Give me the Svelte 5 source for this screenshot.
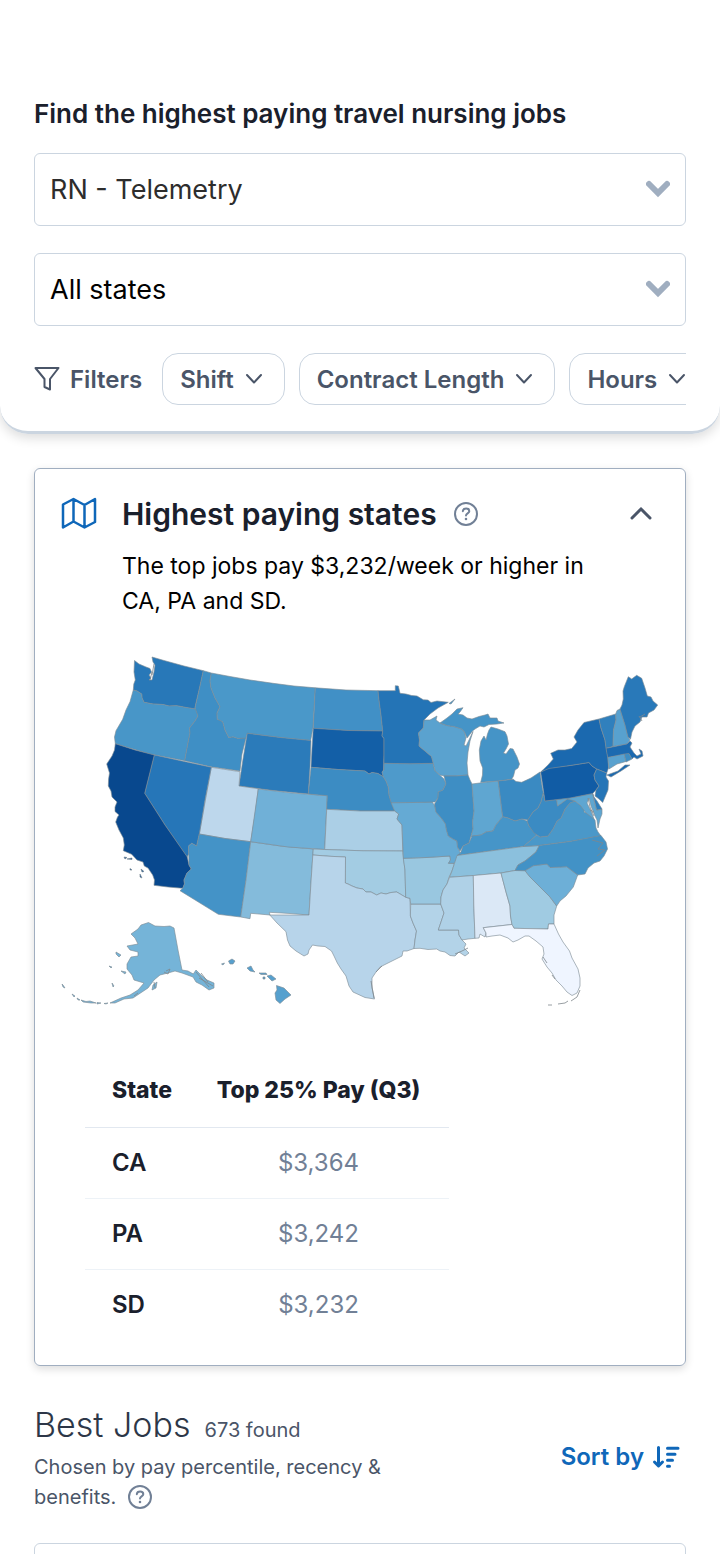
<script>
  let specialty = $state('RN - Telemetry');
  let region = $state('All states');
  let open = $state(true);

  const chips = ['Shift', 'Contract Length', 'Hours'];
  const rows = [
    { state: 'CA', pay: '$3,364' },
    { state: 'PA', pay: '$3,242' },
    { state: 'SD', pay: '$3,232' }
  ];

  // Each entry: fill colour and one or more outlines of the state.
  const states = [
    ['#2878b8', 'M134.5 660.5L139 664L146 667L150 668.5L151.5 672L149 675L151 678L149 680L152 680L154 672L155 665L153 662L152 657L164 660.5L184 666L203.3 670.7L200 686L196 703L194.7 709L186 707.5L176.7 705.7L169 706L163 704.5L153 704L144 702.3L142 698L141.7 694L137 691L133.3 690L133.8 684L135.3 680L134 672Z'],
    ['#4896c8', 'M133.3 690L137 691L141.7 694L142 698L144 702.3L153 704L163 704.5L169 706L176.7 705.7L186 707.5L196 709L198 716L195 721L189.5 728L190 733L188 743L184.7 760.7L150 754L115.3 743.7L114.5 737L116 730.7L122.7 719.3L126 710L130 701.7Z'],
    ['#3f8fc5', 'M203.3 670.7L211.3 673L210 681L211 688L215 698L220 706.7L217 713L217.3 719.3L220 720L222.7 721.7L225 730L228.7 737.5L233 736.8L238 738.5L244.7 737.3L246 738L242 754L240 771L211 766.8L184.7 760.7L188 743L190 733L189.5 728L195 721L198 716L195 708L200 686Z'],
    ['#4a98c9', 'M211.3 673L230 676.5L250 680L273 683.3L294 686L315.3 687.8L314 710L313 728L310.7 740.5L280 737.5L247.3 733.3L246 738L238 738.5L233 736.8L228.7 737.5L225 730L222.7 721.7L217.3 719.3L217 713L220 706.7L215 698L211 688L210 681Z'],
    ['#2b7bba', 'M247.3 733.3L280 737.5L311 740.5L310 767L308.3 794L273 790.5L239 786L243 759Z'],
    ['#bdd7ec', 'M211.3 767.3L240 771.7L239 786L258.3 788.7L255 815L250.7 841.7L225 838.5L199.3 834Z'],
    ['#2676b8', 'M154.3 755L182 761L211.3 767.3L205 800L199.3 834L196.7 846L191.7 843.3L188.5 846L188.7 854L187 857L165 825L144.7 793.3Z'],
    ['#08488e', 'M115.3 743.7L135 750L154.3 755L144.7 793.3L165 825L187.3 857L189 865L191.3 869L187 873L184 880L184.5 884L182.7 888.3L168 887L154 885.3L154.5 880L152.7 875L148 868L144.3 866L143 862L137 860L131.7 854.3L123.3 850.7L124.3 845L123.3 838L119 830L115.7 822L117.5 817L119 815L115 811.5L115 807L117 802L115 800L112 797L111 791L108.3 786L108.6 779L109.5 773L106.7 764L112 756L114.5 750Z'],
    ['#4493c7', 'M199.3 834L225 838.5L250.7 841.7L246 880L240.7 917L218.3 914.3L200 903L180 890.7L182.7 888.3L184.5 884L184 880L187 873L191.3 869L189 865L188.7 854L188.5 846L191.7 843.3L196.7 846Z'],
    ['#84bbdb', 'M250.7 841.7L281 846L313.3 849L311 882L309 915L290 913.5L269.3 912.3L270 915L250.7 913.3L250 918.7L240.7 917L246 880Z'],
    ['#70b0d7', 'M258.3 789L292 793L327.3 795.7L326 822L324.7 849.5L288 847L250.7 841.7Z'],
    ['#4190c6', 'M315.3 687.8L346 690L378 690.7L379 700L381 715L382.7 731L348 730.5L313.3 728.3Z'],
    ['#135fa7', 'M313.3 728.3L348 730.5L382.7 731L382 736L384 738.5L384 755L383.6 770L382 772L383.3 776.7L378 773.5L372 772.5L369 774L365 771L338 769.5L311 767.3L312 748Z'],
    ['#3c8cc3', 'M311 767.3L338 769.5L365 771L369 774L372 772.5L378 773.5L383.3 776.7L386 781L388.3 787L389 795L391 801L394.7 811L360 811L326.7 809.3L327.3 795.7L308.3 794Z'],
    ['#abcfe6', 'M326.7 809.3L360 811L394.7 811L398.7 814L397 819L402 825L402.7 851L363 850.8L324.7 849.5Z'],
    ['#a3cce3', 'M313.3 849L324.7 849.5L363 850.8L402.7 851L405 870L405.7 897.3L401 894.5L396.7 892L391 892.5L386 894L381 893L376.7 895L371 892L366 892L363 889L357 888L352 886L348 884L345.3 883L345.5 857L330 856.3L312.8 855Z'],
    ['#b7d4ea', 'M312.8 855L330 856.3L345.5 857L345.3 883L348 884L352 886L357 888L363 889L366 892L371 892L376.7 895L381 893L386 894L391 892.5L396.7 892L401 894.5L405.7 897.3L410 898.3L410.4 916L413 923L416.5 931L415 940L414 948.5L407 951L403 951L402 956L396 959L388 963L380 967L376 972L372 978L372 988L374.5 999L365 997.5L353 992L349 986L346 976L341 969L337.3 963L334 956L331.5 951L325 946.5L318 946L312.5 945L309 950L308 954L304 956L296 951L290 946L287.5 940L286 931.7L277 923L269.8 915L309 915L311 882Z'],
    ['#b3d3e8', 'M410.7 904L440.7 904L444 913L441 922L438.3 930L458.5 930L459 935L462 940L466 944L464 948L469 953L465 956L459 952L455 956L450 955.5L445 952L440 951L436.7 949L428 949.5L420 948.3L414 948.5L415 940L416.5 931L413 923L410.4 916Z'],
    ['#99c7e0', 'M403.3 858.3L426 857.5L450 856L450.5 860L448.5 863.3L454.5 863.3L452 871L449 877.3L447 884L443 890L441 897L440.7 904L410.7 904L410 898.3L405.7 897.3L405 870Z'],
    ['#65aad4', 'M391 802.7L412 802.5L432 801.8L435 806L436 812L442 819L445.5 824L446.5 830L448.3 836L453 839L457 841L457.5 847L460.5 853L458 855L457 858L455.5 861.7L454 863.3L448.5 863.3L450.5 860L450 856L426 857.5L403.3 858.3L402.5 838L402 825L397 819L398.7 814L394.7 811Z'],
    ['#4e9acb', 'M384 763.3L410 763.7L433.3 763.3L434.5 770L438.5 774L444 779L446 784L443 790L438.3 792L438 798L435 802L412 802.5L391 802.7L389 795L388.3 787L386 781L383.3 776.7L382 772L384 770Z'],
    ['#2474b6', 'M378 690.7L395.3 690.7L395.3 685.7L398.3 686L400 693.3L406 694L411.7 695.5L417 696L423.3 699.8L428 700L431 702.5L437 701L448.3 702.3L438 708L430 714L424 720L423.3 728L418.5 733L419.5 740L419 746L425 751L431.5 756.5L433.3 763.3L410 763.7L384 763.3L384 738.5L382 736L382.7 731L381 715L379 700Z'],
    ['#5aa2cf', 'M424 720L430 720L437 716L436 720L440 723L447 725.5L454 726.5L461.7 729L464.5 732L466 738L464 745L466 746L469 740L473 731.5L470 741L468 752L467 763L468 775L456 776L444 776L440 775L435 771L433.3 763.3L431.5 756.5L425 751L419 746L419.5 740L418.5 733L423.3 728Z'],
    ['#4594c7', 'M440 723L447 718L452 714L457 709L463 707.7L460 712L458 714L463 715L467 718L472 719L479 716.5L485 715L488 714L490 718L497 718L498 721L504 723L497 724L489 724.5L484 727L480 726L475 729L472.5 731L467 738L464.5 732L461.7 729L454 726.5L447 725.5ZM491 727L498 729L505 731.7L507 736L508.5 744L506 749L503.5 753L506 754L510 748.5L513 749L517 757L519.5 764L518 768L515 770L513.5 776L511.7 779.3L498 781L480.7 782.3L482.5 775L482.7 768L480 761L479.3 750L481 741L484 736L486 740L487.5 734L489 730ZM449 703.5L455 699L451 704Z'],
    ['#3e8ec4', 'M444 776L456 776L468 775L470 780L472 784L473 798L474 811L472.5 822L473 829L471 836L469 843L463 846L460 851L457.5 847L457 841L453 839L448.3 836L446.5 830L445.5 824L442 819L436 812L434.5 804L438 798L438.3 792L443 790L446 784Z'],
    ['#5fa6d1', 'M472 784L485 782.3L498.3 781L500.5 799L502.7 816.7L500 820L496 825L493 831L486 832L481 835L471 836.5L473 829L472.5 822L474 811L473 798Z'],
    ['#3a8ac2', 'M498.3 781L513.3 779.3L516 781.5L521.7 782.3L531 778L540 772L542 786L543.3 793L541 802L538 808L533 812L528 820L522 819L515 821L508 818L502.7 816.7L500.5 799Z'],
    ['#4695c8', 'M457 855.5L460.5 853L463 846L469 843L472 836L481 835L486 832L493 831L496 825L500 820L502.7 816.7L508 818L515 821L522 819L527 821L529 826L536.7 835L531 840L523.3 846.5L490 851Z'],
    ['#8bc0dd', 'M457 855.5L490 851L523.3 846.5L539.3 845.5L536 852L530 857L525 861L518 865L515 870.5L501 873L475 875.5L449.5 877.3L452 871L454.5 863.3Z'],
    ['#4a98c9', 'M523.3 846.5L531 840L536.7 835L540 837L548 836L553 829L557 821L561 818L565 809L570 803L575 801L580 805L585 808L584 812L589 814L595 820L596 828L598 832L601 836L570 841.5L539.3 845.5Z'],
    ['#3b8bc3', 'M543.3 793L545 801L556.7 799.5L557.5 806L563 802L567 799L572 799L575 801L570 803L565 809L561 818L557 821L553 829L548 836L540 837L534 833L529 826L527 821L533 812L538 808L541 802Z'],
    ['#5fa6d1', 'M556.7 799.5L575 797L592.7 793.5L594.5 802L596.7 810L602 809L602 814L600 819L598 828L597 820L595 816L591 806L589 798L587 803L591 811L594 819L586 813L580 805L575 801L567 799L563 802L557.5 806Z'],
    ['#2e7ebc', 'M592.7 793.5L594 797L597 801L602 809L596.7 810Z'],
    ['#115ca5', 'M540.7 772L549 767.7L570 765.5L589 762.5L592 766L596.7 769L594 775L595 780L599 786L596 790L592.7 793.5L570 798L545 801Z'],
    ['#1b69af', 'M540.7 772L548 765L553.3 759L550.7 753.3L558 750L565 750L571.7 748.5L577 742L574 737L578 730L584 722.5L599 719L601 728L605 740L606.5 750L608 757L608.5 768L606.7 773L596.7 769L592 766L589 762.5L570 765.5L549 768.5ZM607 775L618 771L625 765L630 765L621 771L611 777Z'],
    ['#2575b7', 'M596.7 769L606.7 773L606 777L608.5 781L608 790L605 797L602.7 802.5L599 799L595 796L596 790L599 786L595 780L594 775Z'],
    ['#3080bd', 'M599 719L615.7 714L616 720L613.5 730L613 746.5L606 748.3L605 740L601 728Z'],
    ['#58a1cf', 'M615.7 714L617 710.5L620 709L625 725L628 737L630 740L627 744L613 746.5L613.5 730L616 720Z'],
    ['#2979b9', 'M620 709L622 705L623.3 699L623 691L624.3 686.7L628.3 676.7L631.7 679L636.7 675.3L641.7 678.3L645 688L647.3 696L651 697L653 701L657.7 705L654 710L648.5 713L647 717L642 717L640 722L635 726L632 732L630.5 739L628 737L625 725Z'],
    ['#1c6ab0', 'M606 748.3L627 744L630 741L632 743L630 747L634 753L637 756L641 754L639 749L642 751L643 756L637 759L634 757L632 759L629 754L607.7 757.5Z'],
    ['#5aa2cf', 'M607.7 757.5L624.3 754L626 761.5L617 764L609 769Z'],
    ['#3d8dc3', 'M624.3 754L629 753.5L632 759L626 762Z'],
    ['#afd1e7', 'M449.5 877.3L473.3 875.5L473.8 905L475 938.3L468 939L462 940L459 935L458.5 930L438.3 930L441 922L444 913L440.7 904L441 897L443 890L447 884Z'],
    ['#dbe8f6', 'M473.3 875.5L501 873L506 892L510 906L510.5 916L512 924.5L483.3 927.7L486 933L485 937L480 934L479 938L475 938.3L473.8 905Z'],
    ['#a0cbe2', 'M501 873L515 870.5L525 870.7L530 877L540 887L550 897L556.7 906L554 915L554 924L548.5 924L548 929L514 928.3L512 924.5L510.5 916L510 906L506 892Z'],
    ['#6dafd7', 'M525 870.7L533.3 865.7L547 864L550 867.5L566.7 866.7L577.7 875L573.3 887L566 896L560 901L556.7 906L550 897L540 887L530 877Z'],
    ['#4292c6', 'M515 870.5L518 865L525 861L530 857L536 852L539.3 845.5L570 841.5L601 835.5L606 842L607.5 849L604 856L600 861L594 863L588 868L585 874L577.7 875L566.7 866.7L550 867.5L547 864L533.3 865.7L525 870.7Z'],
    ['#eff5ff', 'M483.3 927.7L512 924.5L514 928.3L548 929L548.5 924L554 924L558.5 934L563 942L569.5 951L572 958L578 969L580 978L580 986L577 993L572 995.5L567 992L562 986L556 980L552 973L547 967L542 959L544 954L543 947L536 941L529 936L525 936L518 940L513 942L508 938L500 935L492 936L486 937L486 933Z'],
    ['#75b4d8', 'M148.5 922.5L155 926L164 926.5L170 926L174 928L178 950L182 970L188 971L193.3 974L196 970L201 975L207 980L214 983L214 988L209 990L202 985L196 982L193 977L182 973L175 971L168 973L160 975L154 980L148 988L139 994L133 998L124 999L115 1003L110 1003L121 998L130 995L138 990L144 983L134 980L132 975L127 969L127 964L131 957L138 956L138 952L130 950L127 946L138 944L135 938L131 934L138 929L141 925ZM152 990L153 985L157 982L156 988ZM116 952L121 955L119 957L116 954ZM121 971L126 972L125 974ZM109 966L112 967L111 968ZM112 983L114 986L113 987Z'],
    ['#75b4d8', 'M62 984L63 985L65 988L63 987ZM72 994L75 996L74 997ZM77 998L80 1000L78 1000ZM81 1000L86 1001.5L90 1001L96 1003L91 1003L83 1002ZM97 1002.5L101 1003L97 1004ZM104 1003.5L108 1003L106 1004Z'],
    ['#56a0ce', 'M228.5 961L232 959L235 961L233 964L230 964ZM221.5 964L224.5 963L223 965ZM247 968L251 966L253 970L255 972L250 971ZM259 973L266 973L267 974.5L261 974.5ZM267 976L271 975L276 979L272 981L269 978ZM263 977L265 977L265 979L263 979ZM276.5 985.5L284 988L291 995L285 999L280 1003.5L276 1000L275 993L277 990Z'],
    ['#08488e', 'M124 857L127 857.5L125 859ZM127 859L132 858L132 859.5ZM130 868.5L132 870L130 870ZM141 869L144 871.5L142 872ZM140 874L142 878L140 877Z']
  ];
</script>

{#snippet help()}
  <svg class="help" viewBox="0 0 24 24" fill="none" stroke="currentColor" stroke-width="2" stroke-linecap="round" aria-hidden="true">
    <circle cx="12" cy="12" r="11" />
    <path d="M8.8 9.2C9 7.6 10.3 6.6 12.1 6.6C14 6.6 15.3 7.7 15.3 9.2C15.3 11.3 12 11.4 12 13.4" />
    <circle cx="12" cy="17" r=".7" fill="currentColor" stroke-width="1.2" />
  </svg>
{/snippet}

{#snippet caret()}
  <svg class="caret" viewBox="0 0 24 20" fill="none" stroke="#a0aec0" stroke-width="6" stroke-linecap="round" aria-hidden="true">
    <path d="M3 4L12 13L21 4" />
  </svg>
{/snippet}

<div class="page">
  <header>
    <h1>Find the highest paying travel nursing jobs</h1>
    <div class="select">
      <select class="soft" aria-label="Specialty" bind:value={specialty}>
        <option>RN - Telemetry</option>
      </select>
      {@render caret()}
    </div>
    <div class="select">
      <select aria-label="State" bind:value={region}>
        <option>All states</option>
      </select>
      {@render caret()}
    </div>
    <div class="filters">
      <button class="plain">
        <svg width="26" height="26" viewBox="0 0 26 26" fill="none" stroke="currentColor" stroke-width="2" stroke-linejoin="round" aria-hidden="true">
          <path d="M1.5 2H24.5L16 13V23.5L10.5 21V13Z" />
        </svg>
        Filters
      </button>
      {#each chips as chip}
        <button class="chip">
          {chip}
          <svg width="18" height="12" viewBox="0 0 18 12" fill="none" stroke="currentColor" stroke-width="2" stroke-linecap="round" stroke-linejoin="round" aria-hidden="true">
            <path d="M2 2L9 9.5L16 2" />
          </svg>
        </button>
      {/each}
    </div>
  </header>

  <main>
    <section class="card">
      <div class="head">
        <svg class="map-icon" width="36" height="34" viewBox="0 0 36 34" fill="none" stroke="#0f67b9" stroke-width="2.5" stroke-linejoin="round" aria-hidden="true">
          <path d="M2 8.5L12.5 3L23.5 9L34 3V26L23.5 31.5L12.5 25.5L2 31.5ZM12.5 3V25.5M23.5 9V31.5" />
        </svg>
        <div class="copy">
          <h2>Highest paying states <button class="icon" aria-label="About highest paying states">{@render help()}</button></h2>
          <p>The top jobs pay $3,232/week or higher in CA, PA and SD.</p>
        </div>
        <button class="icon toggle" aria-label="Toggle" aria-expanded={open} onclick={() => (open = !open)}>
          <svg width="22" height="14" viewBox="0 0 22 14" fill="none" stroke="#4a5568" stroke-width="3" stroke-linecap="round" aria-hidden="true">
            <path d="M2 12L11 3L20 12" />
          </svg>
        </button>
      </div>
      {#if open}
        <svg class="map" viewBox="35 640 650 380" role="img" aria-label="Pay by state">
          {#each states as [fill, d]}
            <path {d} {fill} />
          {/each}
          <path class="coast" d="M552 1005L548 1005M558 1004L565 1003L568 1001M571 1001L577 997L580 990M543 957L547 963M552 975L555 979M588 798L590 807L594 816M590 810L594 812M592 840L603 843L598 849L605 850L597 856M455 954L462 951L468 948M166 971L170 969L168 974L164 972M196 972L209 987M199 978L213 986M201 973L208 982M134 996L138 993M154 982L155 988M152 672L150 680M154 664L152 675M371 981L374 998M376 972L382 966M640 717L645 714M639 716L642 721" />
        </svg>
        <table>
          <thead>
            <tr><th scope="col">State</th><th scope="col">Top 25% Pay (Q3)</th></tr>
          </thead>
          <tbody>
            {#each rows as row}
              <tr><th scope="row">{row.state}</th><td>{row.pay}</td></tr>
            {/each}
          </tbody>
        </table>
      {/if}
    </section>

    <section class="jobs">
      <div class="intro">
        <div class="title"><h2>Best Jobs</h2><span>673 found</span></div>
        <p>Chosen by pay percentile, recency &amp; benefits. <button class="icon" aria-label="About best jobs">{@render help()}</button></p>
      </div>
      <button class="sort">
        Sort by
        <svg width="28" height="24" viewBox="0 0 28 24" fill="none" stroke="currentColor" stroke-width="3" stroke-linecap="round" stroke-linejoin="round" aria-hidden="true">
          <path d="M6.5 2.5V20M2.5 17L6.5 21L10.5 17" />
          <path d="M15.5 3.3H26M15.5 9.3H23M15.5 15.3H20.5M15.5 21.3H17.5" />
        </svg>
      </button>
    </section>
    <article class="job"></article>
  </main>
</div>

<style>
  :global(body) {
    margin: 0;
    background: #fff;
  }
  .page {
    font-family: Inter, sans-serif;
    color: #000;
    height: 100vh;
    overflow: hidden;
  }
  h1, h2, p {
    margin: 0;
  }
  button {
    font: inherit;
    color: inherit;
    background: none;
    border: 0;
    padding: 0;
  }
  header {
    padding: 94px 34px 26px;
    display: grid;
    grid-template-columns: minmax(0, 1fr);
    gap: 27px;
    border-bottom: 3px solid #cbd5e0;
    border-radius: 0 0 28px 28px;
    box-shadow: 0 4px 12px rgba(0, 0, 0, 0.14);
  }
  h1 {
    font-size: 26px;
    line-height: 40px;
    font-weight: 600;
    color: #1a202c;
    margin-bottom: -8px;
  }
  .select {
    display: grid;
    align-items: center;
  }
  .select > :global(*) {
    grid-area: 1 / 1;
  }
  select {
    appearance: none;
    width: 100%;
    height: 73px;
    padding: 0 60px 0 15px;
    font: 400 27px/40px Inter, sans-serif;
    color: #000;
    background: #fff;
    border: 1px solid #cbd5e0;
    border-radius: 6px;
  }
  .soft {
    color: #2d2d2d;
  }
  .caret {
    width: 24px;
    height: 20px;
    justify-self: end;
    margin-right: 16px;
    pointer-events: none;
  }
  .filters {
    display: flex;
    gap: 14px;
    overflow: hidden;
    font-size: 24px;
    font-weight: 600;
    color: #4a5568;
  }
  .filters button {
    display: flex;
    align-items: center;
    flex: none;
    gap: 11px;
    white-space: nowrap;
  }
  .plain {
    padding-right: 6px;
  }
  .filters .plain {
    gap: 10px;
  }
  .chip {
    height: 52px;
    padding: 0 21px 0 17px;
    border: 1px solid #cbd5e0;
    border-radius: 16px;
  }
  main {
    padding: 34px 34px 0;
  }
  .card {
    border: 1px solid #a0aec0;
    border-radius: 6px;
    box-shadow: 0 3px 8px rgba(0, 0, 0, 0.14);
    padding-bottom: 25px;
  }
  .head {
    display: flex;
    align-items: flex-start;
    padding: 25px 33px 0 26px;
  }
  .map-icon {
    flex: none;
    margin: 2px 25px 0 0;
  }
  .copy {
    flex: 1;
    max-width: 480px;
  }
  .copy h2 {
    display: flex;
    align-items: center;
    gap: 17px;
    font-size: 30px;
    line-height: 40px;
    font-weight: 600;
    color: #1a202c;
  }
  .copy p {
    margin-top: 15px;
    font-size: 23px;
    line-height: 35px;
  }
  .icon {
    display: inline-flex;
    color: #718096;
  }
  .help {
    width: 24px;
    height: 24px;
  }
  .toggle {
    margin: 12px 0 0 auto;
  }
  .map {
    display: block;
    width: 100%;
    margin-top: 21px;
  }
  .map path {
    stroke: rgba(125, 138, 148, 0.7);
    stroke-width: 0.9;
    stroke-linejoin: round;
  }
  .map .coast {
    fill: none;
    stroke: #7f878c;
    stroke-width: 0.8;
  }
  table {
    width: 364px;
    margin: 32px 0 0 50px;
    border-collapse: collapse;
    table-layout: fixed;
    font-size: 24px;
    line-height: 34px;
  }
  th, td {
    padding: 18px 0;
    text-align: center;
    border-bottom: 1px solid #edf2f7;
  }
  th:first-child {
    width: 76px;
    padding-left: 27px;
    text-align: left;
    font-weight: 600;
    color: #1a202c;
  }
  thead th,
  thead th:first-child {
    padding-top: 21px;
    padding-bottom: 20px;
    font-size: 23px;
    font-weight: 800;
    color: #1a202c;
    border-color: #e2e8f0;
  }
  td {
    color: #718096;
  }
  tbody tr:last-child > * {
    border-bottom: 0;
  }
  .jobs {
    display: flex;
    align-items: center;
    justify-content: space-between;
    padding: 35px 6px 0 0;
    color: #4a5568;
  }
  .intro {
    max-width: 380px;
  }
  .title {
    display: flex;
    align-items: baseline;
    gap: 14px;
    font-size: 20px;
  }
  .title h2 {
    font-size: 34px;
    line-height: 48px;
    font-weight: 300;
    color: #2d3748;
  }
  .intro p {
    font-size: 20px;
    line-height: 30px;
    margin-top: 3px;
  }
  .intro .icon {
    margin-left: 6px;
    vertical-align: -5px;
  }
  .sort {
    display: flex;
    align-items: center;
    gap: 8px;
    font-size: 24px;
    font-weight: 600;
    color: #0f67b9;
  }
  .job {
    height: 200px;
    margin-top: 31px;
    border: 1px solid #cbd5e0;
    border-radius: 6px;
  }
</style>
